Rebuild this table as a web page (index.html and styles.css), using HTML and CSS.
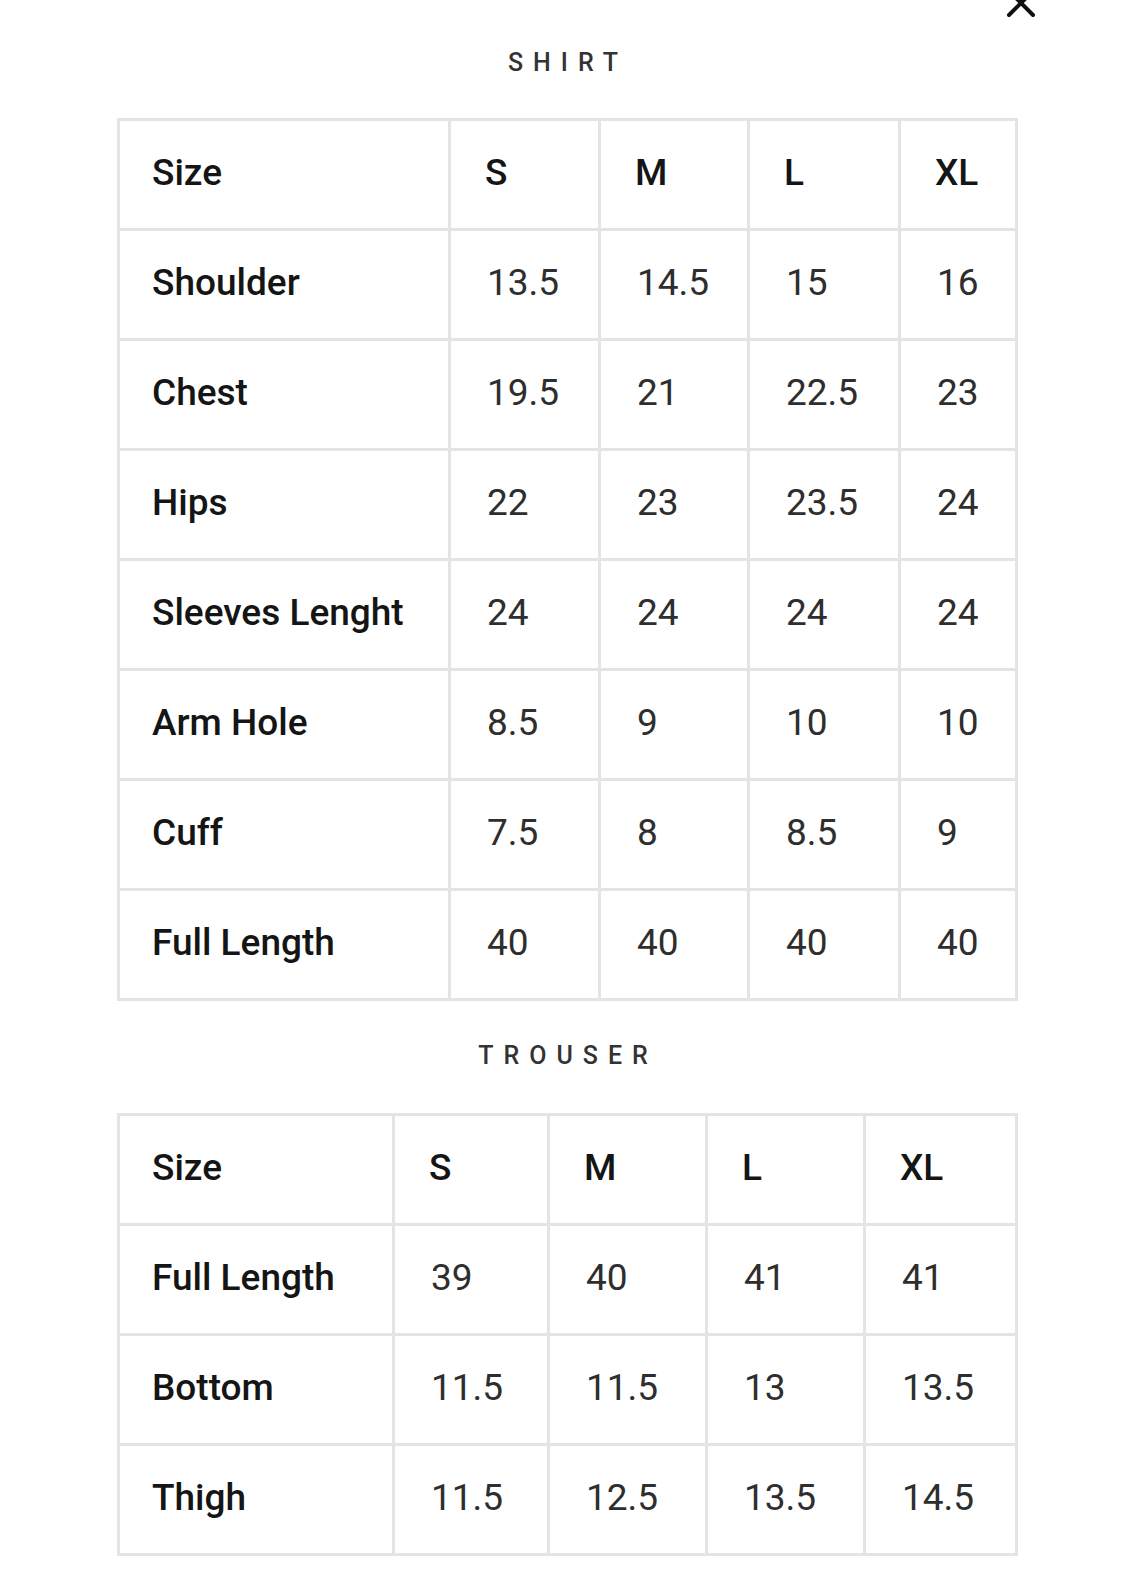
FILE: index.html
```html
<!DOCTYPE html>
<html>
<head>
<meta charset="utf-8">
<link rel="stylesheet" href="styles.css">
</head>
<body>
<div class="modal">
  <button class="close" aria-label="Close">
    <svg width="30" height="30" viewBox="0 0 30 30"><path d="M3 3 L27 27 M27 3 L3 27" stroke="#111" stroke-width="4" stroke-linecap="round" fill="none"/></svg>
  </button>
  <h2 class="title title-shirt">SHIRT</h2>
  <table class="chart chart-shirt">
    <colgroup><col class="c1"><col class="c2"><col class="c3"><col class="c4"><col class="c5"></colgroup>
    <tr class="head"><td>Size</td><td>S</td><td>M</td><td>L</td><td>XL</td></tr>
    <tr><td class="lbl">Shoulder</td><td>13.5</td><td>14.5</td><td>15</td><td>16</td></tr>
    <tr><td class="lbl">Chest</td><td>19.5</td><td>21</td><td>22.5</td><td>23</td></tr>
    <tr><td class="lbl">Hips</td><td>22</td><td>23</td><td>23.5</td><td>24</td></tr>
    <tr><td class="lbl">Sleeves Lenght</td><td>24</td><td>24</td><td>24</td><td>24</td></tr>
    <tr><td class="lbl">Arm Hole</td><td>8.5</td><td>9</td><td>10</td><td>10</td></tr>
    <tr><td class="lbl">Cuff</td><td>7.5</td><td>8</td><td>8.5</td><td>9</td></tr>
    <tr><td class="lbl">Full Length</td><td>40</td><td>40</td><td>40</td><td>40</td></tr>
  </table>
  <h2 class="title title-trouser">TROUSER</h2>
  <table class="chart chart-trouser">
    <colgroup><col class="c1"><col class="c2"><col class="c3"><col class="c4"><col class="c5"></colgroup>
    <tr class="head"><td>Size</td><td>S</td><td>M</td><td>L</td><td>XL</td></tr>
    <tr><td class="lbl">Full Length</td><td>39</td><td>40</td><td>41</td><td>41</td></tr>
    <tr><td class="lbl">Bottom</td><td>11.5</td><td>11.5</td><td>13</td><td>13.5</td></tr>
    <tr><td class="lbl">Thigh</td><td>11.5</td><td>12.5</td><td>13.5</td><td>14.5</td></tr>
  </table>
</div>
</body>
</html>
```

FILE: styles.css
```css
html, body {
  margin: 0;
  padding: 0;
  background: #fff;
}
body {
  font-family: Roboto, "Liberation Sans", Arial, sans-serif;
  color: #222;
}
.modal {
  position: relative;
  width: 896px;
  margin: 0 0 0 117px;
  padding-top: 45px;
}
.close {
  position: absolute;
  top: -12px;
  left: 889px;
  width: 30px;
  height: 30px;
  padding: 0;
  border: 0;
  background: none;
}
.close svg { display: block; }
.title {
  margin: 0;
  text-align: center;
  font-size: 25px;
  line-height: 36px;
  font-weight: 500;
  letter-spacing: 10px;
  padding-left: 6px;
  color: #333;
}
.title-shirt { margin-bottom: 37px; }
.title-trouser { margin-top: 37px; margin-bottom: 39px; }
.chart {
  border-collapse: collapse;
  table-layout: fixed;
  width: 898px;
}
.chart td {
  border: 3px solid #e4e4e4;
  height: 103px;
  padding: 0 0 4px 36px;
  font-size: 37px;
  font-weight: 400;
  color: #2e2e2e;
  white-space: nowrap;
  vertical-align: middle;
}
.chart td.lbl,
.chart .head td {
  font-weight: 500;
  color: #151515;
}
.chart .head td { padding-left: 34px; }
.chart td.lbl,
.chart .head td:first-child { padding-left: 32px; }
.chart-shirt .c1 { width: 331px; }
.chart-shirt .c2 { width: 150px; }
.chart-shirt .c3 { width: 149px; }
.chart-shirt .c4 { width: 151px; }
.chart-shirt .c5 { width: 117px; }
.chart-trouser .c1 { width: 275px; }
.chart-trouser .c2 { width: 155px; }
.chart-trouser .c3 { width: 158px; }
.chart-trouser .c4 { width: 158px; }
.chart-trouser .c5 { width: 152px; }
```
